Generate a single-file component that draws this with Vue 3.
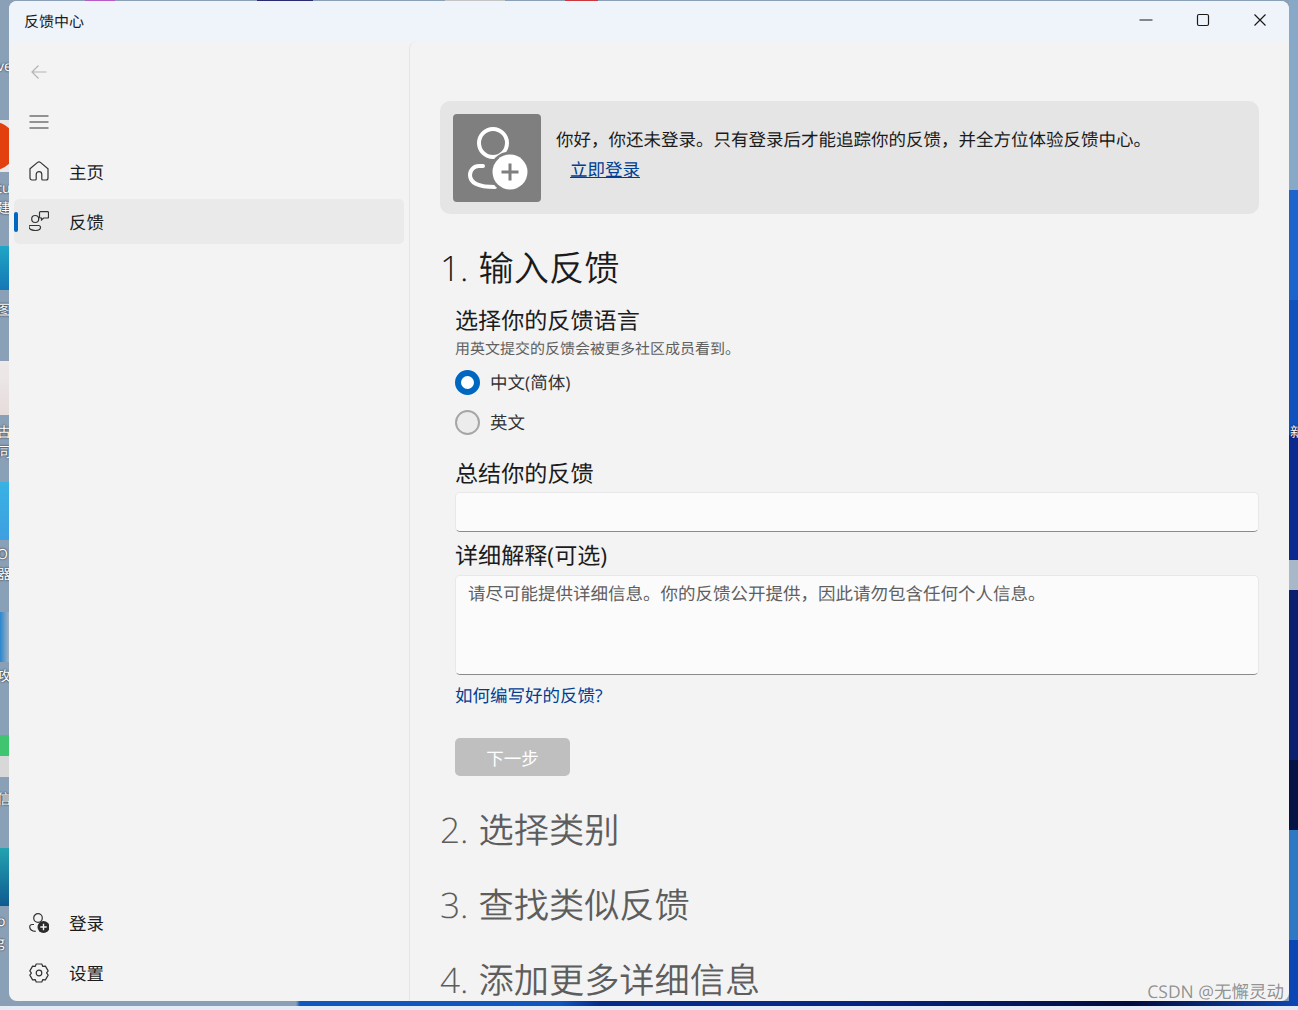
<template>
  <div class="desktop">
    <div class="bits">
      <span v-for="b in bits" :key="b.top" class="bit" :style="{ top: b.top + 'px', height: b.height + 'px', background: b.bg }"></span>
      <span v-for="f in frags" :key="f.top" class="frag" :style="{ top: f.top + 'px' }">{{ f.text }}</span>
      <span v-for="t in topBits" :key="t.left" class="top-bit" :style="{ left: t.left + 'px', width: t.width + 'px', background: t.bg }"></span>
      <span class="right-side"></span>
      <span class="right-frag">新</span>
      <span class="bottom-side"></span>
      <span class="taskbar"></span>
    </div>

    <div class="window">
      <header class="titlebar">
        <span class="app-title">反馈中心</span>
        <div class="caption">
          <svg width="14" height="14" viewBox="0 0 14 14"><path d="M0.5 7h13" stroke="#1a1a1a" stroke-width="1.2" fill="none" /></svg>
          <svg width="14" height="14" viewBox="0 0 14 14"><rect x="1.5" y="1.5" width="11" height="11" rx="1.5" stroke="#1a1a1a" stroke-width="1.2" fill="none" /></svg>
          <svg width="14" height="14" viewBox="0 0 14 14"><path d="M1.5 1.5l11 11M12.5 1.5l-11 11" stroke="#1a1a1a" stroke-width="1.2" fill="none" /></svg>
        </div>
      </header>

      <div class="body">
        <nav class="sidebar">
          <div class="nav-row">
            <svg class="nav-icon" width="20" height="20" viewBox="0 0 20 20"><path d="M17.5 10H3M9.5 3.500L3 10l6.500 6.500" stroke="#b4b4b4" stroke-width="1.2" fill="none" /></svg>
          </div>
          <div class="nav-row">
            <svg class="nav-icon" width="20" height="20" viewBox="0 0 20 20"><path d="M0.500 4h19M0.500 10h19M0.500 16h19" stroke="#333" stroke-width="1.2" fill="none" /></svg>
          </div>
          <div v-for="item in topItems" :key="item.label" class="nav-row page-row">
            <div class="nav-item" :class="{ active: item.active }">
              <i v-if="item.active" class="pill"></i>
              <svg v-if="item.icon === 'home'" class="nav-icon" width="20" height="20" viewBox="0 0 20 20"><path d="M1 7.800L8.600 1.400a2.200 2.200 0 0 1 2.800 0L19 7.800V17a2 2 0 0 1-2 2h-3.200a1 1 0 0 1-1-1v-4.500a2.800 2.800 0 0 0-5.600 0V18a1 1 0 0 1-1 1H3a2 2 0 0 1-2-2z" stroke="#333" stroke-width="1.2" fill="none" /></svg>
              <svg v-else class="nav-icon" width="20" height="20" viewBox="0 0 20 20">
                <circle cx="6.200" cy="8" r="3.500" stroke="#333" stroke-width="1.2" fill="none" />
                <path d="M1 14.500h8.500a2 2 0 0 1 2 2c0 1.800-2.400 3-5.200 3S0 18.300 0 16c0-.8.300-1.500 1-1.500z" stroke="#333" stroke-width="1.2" fill="none" />
                <path d="M11.500 .600h7a1 1 0 0 1 1 1v4.400a1 1 0 0 1-1 1h-3.800l-2.200 2v-2h-1a1 1 0 0 1-1-1V1.600a1 1 0 0 1 1-1z" stroke="#333" stroke-width="1.2" fill="none" />
              </svg>
              <span>{{ item.label }}</span>
            </div>
          </div>

          <div class="spacer"></div>

          <div class="nav-row">
            <div class="nav-item">
              <svg class="nav-icon" width="20" height="20" viewBox="0 0 20 20">
                <circle cx="9" cy="5" r="4.300" stroke="#333" stroke-width="1.200" fill="none" />
                <path d="M5 11.500H3a2.300 2.300 0 0 0-2.300 2.300c0 2.800 2.800 4.400 6 4.600" stroke="#333" stroke-width="1.200" fill="none" />
                <circle cx="14.500" cy="14" r="6" fill="#2b2b2b" />
                <path d="M14.500 10.800v6.400M11.300 14h6.400" stroke="#f3f3f3" stroke-width="1.400" />
              </svg>
              <span>登录</span>
            </div>
          </div>
          <div class="nav-row">
            <div class="nav-item">
              <svg class="nav-icon" width="20" height="20" viewBox="0 0 20 20">
                <circle cx="10" cy="10" r="2.800" stroke="#333" stroke-width="1.200" fill="none" />
                <path :d="gearPath" stroke="#333" stroke-width="1.200" fill="none" stroke-linejoin="round" />
              </svg>
              <span>设置</span>
            </div>
          </div>
        </nav>

        <main class="content">
          <section class="banner">
            <div class="avatar">
              <svg width="88" height="88" viewBox="0 0 88 88">
                <circle cx="40" cy="29" r="14" stroke="#fff" stroke-width="4" fill="none" />
                <path d="M30 52H26a9 9 0 0 0-9 9c0 9 10 12 25 12" stroke="#fff" stroke-width="4" fill="none" stroke-linecap="round" />
                <circle cx="57" cy="58" r="20.500" fill="#7f7f7f" />
                <circle cx="57" cy="58" r="17.500" fill="#fff" />
                <path d="M57 49.500v17M48.500 58h17" stroke="#7f7f7f" stroke-width="3" />
              </svg>
            </div>
            <div class="banner-text">
              <p>你好，你还未登录。只有登录后才能追踪你的反馈，并全方位体验反馈中心。</p>
              <a class="link sign-in">立即登录</a>
            </div>
          </section>

          <h1 class="step first">1. 输入反馈</h1>
          <div class="form">
            <h2 class="label">选择你的反馈语言</h2>
            <p class="hint">用英文提交的反馈会被更多社区成员看到。</p>
            <label v-for="lang in languages" :key="lang.name" class="radio-row">
              <i class="radio" :class="{ on: lang.on }"></i>
              <span>{{ lang.name }}</span>
            </label>

            <h2 class="label summary-label">总结你的反馈</h2>
            <div class="field short"></div>
            <h2 class="label detail-label">详细解释(可选)</h2>
            <div class="field tall">请尽可能提供详细信息。你的反馈公开提供，因此请勿包含任何个人信息。</div>
            <a class="link howto">如何编写好的反馈?</a>
            <button class="next" disabled>下一步</button>
          </div>

          <h1 v-for="s in nextSteps" :key="s" class="step muted">{{ s }}</h1>
        </main>
      </div>
      <span class="watermark">CSDN @无懈灵动</span>
    </div>
  </div>
</template>

<script setup>
const topItems = [
  { label: "主页", icon: "home" },
  { label: "反馈", icon: "feedback", active: true },
];
const languages = [
  { name: "中文(简体)", on: true },
  { name: "英文" },
];
const nextSteps = ["2. 选择类别", "3. 查找类似反馈", "4. 添加更多详细信息"];

// bits of desktop icons showing left of the window
const bits = [
  { top: 120, height: 52, bg: "radial-gradient(circle at -8px 26px, #e2400f 24px, #e8e8e8 25px)" },
  { top: 246, height: 44, bg: "linear-gradient(180deg, #1fa6c6, #1577b5)" },
  { top: 361, height: 54, bg: "linear-gradient(180deg, #eeeaea, #e6dcdc)" },
  { top: 482, height: 58, bg: "linear-gradient(180deg, #38b2e4, #3f9fe0)" },
  { top: 612, height: 50, bg: "linear-gradient(90deg, #2a86cf, #a4b4c2)" },
  { top: 735, height: 42, bg: "linear-gradient(180deg, #3fc46f 0 50%, #d8d8d8 50%)" },
  { top: 848, height: 58, bg: "linear-gradient(180deg, #23a3b0, #0f5a90)" },
];
const frags = [
  { top: 58, text: "ve" },
  { top: 180, text: "tu" },
  { top: 200, text: "建" },
  { top: 302, text: "图" },
  { top: 424, text: "古" },
  { top: 444, text: "同" },
  { top: 546, text: "O" },
  { top: 566, text: "器" },
  { top: 668, text: "攻" },
  { top: 791, text: "信" },
  { top: 913, text: "o" },
  { top: 934, text: "g" },
];
const topBits = [
  { left: 85, width: 30, bg: "#b65cc8" },
  { left: 257, width: 56, bg: "#2a2a72" },
  { left: 445, width: 60, bg: "#c4c4c4" },
  { left: 565, width: 33, bg: "#c8383c" },
];

// six tooth cog, same outline as the fluent settings glyph
const gearPath = (() => {
  const pts = [];
  for (let i = 0; i < 6; i++) {
    const a = (Math.PI / 3) * i;
    for (const [off, r] of [[-0.3, 9.4], [0.3, 9.4], [0.52, 7.6]]) {
      const t = a + off;
      pts.push((10 + r * Math.sin(t)).toFixed(2) + " " + (10 - r * Math.cos(t)).toFixed(2));
    }
  }
  return "M" + pts.join("L") + "z";
})();
</script>

<style>
html,
body {
  overflow: hidden;
}
</style>

<style scoped>
.desktop {
  position: relative;
  width: 1298px;
  height: 1010px;
  padding: 1px 9px 0;
  box-sizing: border-box;
  overflow: hidden;
  background: #8aa0b6;
  font-family: "Open Sans", "Noto Sans CJK SC", sans-serif;
  text-rendering: geometricPrecision;
  color: #1b1b1b;
}
.bit {
  position: absolute;
  left: 0;
  width: 9px;
}
.frag {
  position: absolute;
  left: -3px;
  font-size: 14px;
  line-height: 18px;
  color: #fff;
  text-shadow: 0 0 2px #000;
}
.top-bit {
  position: absolute;
  top: 0;
  height: 1px;
}
.right-side {
  position: absolute;
  left: 1289px;
  top: 0;
  width: 9px;
  height: 1010px;
  background: linear-gradient(
    180deg,
    #88a8c8 0 190px,
    #1c64cc 190px 300px,
    #1151bd 300px 435px,
    #0b2a90 435px 560px,
    #a9b8c8 560px 590px,
    #0a1f6e 590px 760px,
    #061345 760px 830px,
    #2f78c4 830px 940px,
    #0c45b4 940px
  );
}
.right-frag {
  position: absolute;
  left: 1290px;
  top: 424px;
  font-size: 14px;
  line-height: 18px;
  color: #fff;
  text-shadow: 0 0 2px #000;
}
.bottom-side {
  position: absolute;
  left: 0;
  top: 1001px;
  width: 1298px;
  height: 5px;
  background: linear-gradient(
    90deg,
    #8a9fb5 0 296px,
    #0f56c0 300px 560px,
    #062a8c 600px 760px,
    #05207a 900px,
    #020a3c 1130px,
    #0d47b5 1298px
  );
}
.taskbar {
  position: absolute;
  left: 0;
  top: 1006px;
  width: 1298px;
  height: 4px;
  background: #e2ebf6;
}
.window {
  position: relative;
  display: flex;
  flex-direction: column;
  width: 1280px;
  height: 1000px;
  border-radius: 8px;
  overflow: hidden;
  background: #f3f3f3;
}
.titlebar {
  flex: none;
  display: flex;
  align-items: center;
  justify-content: space-between;
  height: 40px;
  padding: 0 22px 2px 15px;
  box-sizing: border-box;
  background: #eff4fa;
}
.app-title {
  margin-top: 2px;
  font-size: 15px;
}
.caption {
  display: flex;
  gap: 43px;
}
.body {
  flex: 1;
  display: flex;
  min-height: 0;
}
.sidebar {
  flex: none;
  display: flex;
  flex-direction: column;
  width: 400px;
  padding-top: 6px;
  padding-bottom: 3px;
  box-sizing: border-box;
}
.nav-row {
  flex: none;
  display: flex;
  align-items: center;
  height: 50px;
  padding: 0 5px;
}
.nav-row > .nav-icon {
  margin-left: 15px;
}
.page-row:nth-child(3) {
  margin-top: -1px;
}
.nav-item {
  position: relative;
  flex: 1;
  display: flex;
  align-items: center;
  height: 45px;
  padding-left: 15px;
  border-radius: 5px;
  font-size: 17.5px;
}
.page-row .nav-item span {
  padding-top: 2px;
}
.nav-item.active {
  background: #eaeaea;
}
.pill {
  position: absolute;
  left: 0;
  top: 13px;
  width: 4px;
  height: 20px;
  border-radius: 2px;
  background: #0067c0;
}
.nav-icon {
  flex: none;
  margin-right: 20px;
}
.spacer {
  flex: 1;
}
.content {
  flex: 1;
  min-width: 0;
  padding: 60px 30px 0 30px;
  border-left: 1px solid #e5e5e5;
  border-top-left-radius: 8px;
  overflow: hidden;
}
.banner {
  display: flex;
  height: 113px;
  padding: 13px;
  box-sizing: border-box;
  border-radius: 10px;
  background: #e5e5e5;
}
.avatar {
  flex: none;
  width: 88px;
  height: 88px;
  border-radius: 4px;
  background: #7f7f7f;
}
.banner-text {
  padding: 13px 0 0 15px;
  font-size: 17.5px;
}
.banner-text p {
  margin: 0;
  line-height: 26px;
}
.link {
  display: block;
  color: #003e92;
  font-size: 17.5px;
}
.sign-in {
  margin: 4px 0 0 14px;
  line-height: 26px;
  text-decoration: underline;
  text-decoration-thickness: 1px;
}
.step {
  margin: 0;
  height: 75px;
  font-size: 35.2px;
  font-weight: 350;
  line-height: 50px;
  word-spacing: 1px;
}
.step.first {
  height: 62px;
  margin-top: 29px;
}
.step.muted {
  color: #5d5d5d;
}
.form {
  padding-left: 15px;
  margin-bottom: 29px;
}
.label {
  margin: 0;
  font-size: 23.1px;
  font-weight: 400;
  line-height: 30px;
}
.hint {
  margin: 3px 0 2px;
  font-size: 15px;
  line-height: 22px;
  color: #5f5f5f;
}
.radio-row {
  display: flex;
  align-items: center;
  gap: 10px;
  height: 40px;
  font-size: 17.5px;
  color: #333;
}
.radio {
  flex: none;
  width: 25px;
  height: 25px;
  box-sizing: border-box;
  border: 2px solid #a6a6a6;
  border-radius: 50%;
  background: #ececec;
}
.radio.on {
  border: 6px solid #0067c0;
  background: #fff;
}
.field {
  box-sizing: border-box;
  border: 1px solid #e8e8e8;
  border-bottom: 1px solid #8a8a8a;
  border-radius: 5px;
  background: #fbfbfb;
}
.field.short {
  height: 40px;
  margin-top: 4px;
}
.field.tall {
  height: 100px;
  padding: 4px 12px;
  font-size: 17.5px;
  line-height: 28px;
  color: #5f5f5f;
}
.summary-label {
  margin-top: 16px;
}
.detail-label {
  margin-top: 8px;
  margin-bottom: 5px;
}
.howto {
  margin-top: 8px;
  line-height: 26px;
}
.next {
  display: block;
  width: 115px;
  height: 38px;
  margin-top: 29px;
  border: 0;
  border-radius: 5px;
  background: #bfbfbf;
  color: #fff;
  font: inherit;
  font-size: 17.5px;
}
.watermark {
  position: absolute;
  right: 5px;
  bottom: -3px;
  font-size: 17.5px;
  line-height: 24px;
  color: rgba(90, 90, 90, 0.65);
}
</style>
